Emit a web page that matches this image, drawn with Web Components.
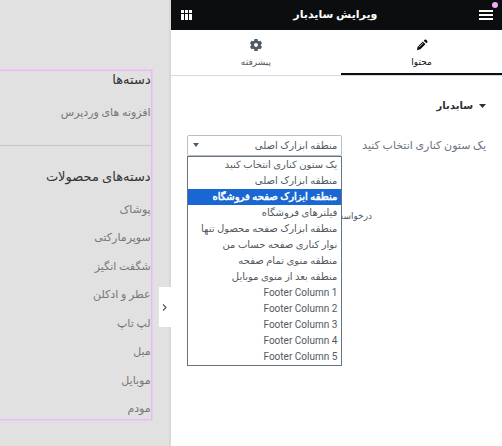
<!DOCTYPE html>
<html lang="fa" dir="rtl">
<head>
<meta charset="utf-8">
<meta name="viewport" content="width=device-width, initial-scale=1">
<title>ویرایش سایدبار</title>
<style>
  body {
    margin: 0;
    font-family: Roboto, "DejaVu Sans", sans-serif;
    font-size: 11px;
    line-height: 16px;
    color: #69727d;
    background: #fff;
  }
</style>
</head>
<body>
<editor-app>
  <editor-panel heading="ویرایش سایدبار">
    <panel-tab slot="tabs" icon="pencil" active>محتوا</panel-tab>
    <panel-tab slot="tabs" icon="gear">پیشرفته</panel-tab>
    <panel-section heading="سایدبار">
      <select-control label="یک ستون کناری انتخاب کنید" selected="1" highlighted="2"></select-control>
      <apply-note>درخواست</apply-note>
    </panel-section>
  </editor-panel>
  <site-preview slot="preview">
    <link-widget heading="دسته‌ها" links="افزونه های وردپرس"></link-widget>
    <link-widget heading="دسته‌های محصولات" grow
      links="پوشاک|سوپرمارکتی|شگفت انگیز|عطر و ادکلن|لپ تاپ|مبل|موبایل|مودم"></link-widget>
  </site-preview>
</editor-app>

<script>
"use strict";

////////////////////////////////////////////
// Constants
const OPTIONS = [
  "یک ستون کناری انتخاب کنید",
  "منطقه ابزارک اصلی",
  "منطقه ابزارک صفحه فروشگاه",
  "فیلترهای فروشگاه",
  "منطقه ابزارک صفحه محصول تنها",
  "نوار کناری صفحه حساب من",
  "منطقه منوی تمام صفحه",
  "منطقه بعد از منوی موبایل",
  "Footer Column 1",
  "Footer Column 2",
  "Footer Column 3",
  "Footer Column 4",
  "Footer Column 5",
];

const ICONS = {
  pencil: `<path d="M1 13l1-4 6-6 3 3-6 6z"/><path d="M9 2l1-1q1-1 2 0l1 1q1 1 0 2l-1 1z"/><path d="M3.5 9.5l5-5" stroke="#fff" stroke-width=".8"/>`,
  gear: `<path fill-rule="evenodd" d="M5.2 0h3.600l.4 2 1.200.7 1.900-.7 1.800 3.100-1.500 1.300v1.300l1.500 1.300-1.800 3.100-1.900-.7-1.200.7-.4 1.900H5.200l-.4-1.900-1.200-.7-1.900.7L-.1 9l1.500-1.300V6.400L-.1 5.100 1.700 2l1.900.7L4.800 2zM7 4.700a2.300 2.300 0 1 0 0 4.600 2.300 2.300 0 0 0 0-4.600z"/>`,
};

////////////////////////////////////////////
// Page frame: panel on one side, preview on the other
class EditorApp extends HTMLElement {
  constructor() {
    super();
    this.attachShadow({ mode: "open" }).innerHTML = `
      <style>
        :host { display: flex; min-height: 100vh; }
        .panel { flex: 1; min-width: 0; }
        .preview { flex: 0 0 34%; display: flex; min-width: 0; }
      </style>
      <div class="panel"><slot></slot></div>
      <div class="preview"><slot name="preview"></slot></div>
    `;
  }
}

class EditorPanel extends HTMLElement {
  constructor() {
    super();
    this.attachShadow({ mode: "open" }).innerHTML = `
      <style>
        :host { display: block; }
        header {
          display: flex;
          align-items: center;
          justify-content: space-between;
          height: 30px;
          padding: 0 9px;
          color: #fff;
          background: #0c0d0e;
        }
        h1 { margin: 0; font-size: 11px; line-height: 20px; }
        button {
          position: relative;
          display: flex;
          padding: 0;
          border: 0;
          color: inherit;
          background: none;
        }
        .badge {
          position: absolute;
          top: -8px;
          right: -5px;
          width: 6px;
          height: 6px;
          border-radius: 50%;
          background: #f0abfc;
        }
        nav { display: flex; height: 45px; border-bottom: 1px solid #d5d8dc; }
      </style>
      <header>
        <button type="button" aria-label="منو">
          <svg width="14" height="10" fill="currentColor"><path d="M0 0h14v2H0zM0 4h14v2H0zM0 8h14v2H0z"/></svg>
          <span class="badge"></span>
        </button>
        <h1>${this.getAttribute("heading")}</h1>
        <button type="button" aria-label="ابزارک‌ها">
          <svg width="12" height="10" fill="currentColor"><path d="M1 0h3v3H1zM5 0h3v3H5zM9 0h3v3H9zM1 4h3v6H1zM5 4h3v6H5zM9 4h3v6H9z"/></svg>
        </button>
      </header>
      <nav><slot name="tabs"></slot></nav>
      <slot></slot>
    `;
  }
}

class PanelTab extends HTMLElement {
  constructor() {
    super();
    this.attachShadow({ mode: "open" }).innerHTML = `
      <style>
        :host { display: flex; flex: 1 0 auto; }
        button {
          flex: 1;
          display: flex;
          flex-direction: column;
          align-items: center;
          gap: 3px;
          padding: 9px 0 0;
          border: 0;
          border-bottom: 2px solid transparent;
          font: inherit;
          font-size: 9px;
          color: #515962;
          background: none;
        }
        :host([active]) button { color: #0c0d0e; border-color: #0c0d0e; }
      </style>
      <button type="button">
        <svg width="12" height="12" viewBox="0 0 14 14" fill="currentColor">${ICONS[this.getAttribute("icon")]}</svg>
        <span><slot></slot></span>
      </button>
    `;
  }
}

class PanelSection extends HTMLElement {
  constructor() {
    super();
    this.attachShadow({ mode: "open" }).innerHTML = `
      <style>
        :host { display: block; padding: 20px 16px; }
        h2 {
          display: flex;
          align-items: center;
          gap: 6px;
          margin: 0 0 19px;
          font-size: 10px;
          line-height: 20px;
          color: #2c3036;
        }
      </style>
      <h2>
        <svg width="7" height="4" fill="currentColor"><path d="M0 0h7L3.500 4z"/></svg>
        ${this.getAttribute("heading")}
      </h2>
      <slot></slot>
    `;
  }
}

////////////////////////////////////////////
// Labelled drop-down with its list open below
class SelectControl extends HTMLElement {
  constructor() {
    super();
    const selected = Number(this.getAttribute("selected"));
    const highlighted = Number(this.getAttribute("highlighted"));
    this.attachShadow({ mode: "open" }).innerHTML = `
      <style>
        :host { display: flex; align-items: center; justify-content: space-between; }
        .field { position: relative; flex: 0 0 52%; font-size: 10px; }
        select {
          appearance: none;
          display: block;
          box-sizing: border-box;
          width: 100%;
          height: 21px;
          padding: 0 4px;
          border: 1px solid #babfc5;
          border-radius: 2px;
          font: inherit;
          color: #515962;
          background: #fff;
        }
        .caret { position: absolute; top: 8px; left: 6px; color: #515962; }
        ul {
          position: absolute;
          top: 100%;
          left: 0;
          right: 0;
          z-index: 1;
          margin: 0;
          padding: 0;
          border: 1px solid #69727d;
          list-style: none;
          color: #515962;
          background: #fff;
        }
        li { height: 16px; padding: 0 4px; white-space: nowrap; }
        li[aria-selected="true"] {
          color: #fff;
          background: #1967d2;
          -webkit-text-stroke: 0.5px #fff;
        }
      </style>
      <label for="column">${this.getAttribute("label")}</label>
      <div class="field">
        <select id="column">
          ${OPTIONS.map((text, i) => `<option${i === selected ? " selected" : ""}>${text}</option>`).join("")}
        </select>
        <svg class="caret" width="6" height="4" fill="currentColor"><path d="M0 0h6L3 4z"/></svg>
        <ul role="listbox">
          ${OPTIONS.map((text, i) => `<li role="option" aria-selected="${i === highlighted}">${text}</li>`).join("")}
        </ul>
      </div>
    `;
  }
}

class ApplyNote extends HTMLElement {
  constructor() {
    super();
    this.attachShadow({ mode: "open" }).innerHTML = `
      <style>
        :host { display: block; padding: 52px 114px 0 0; font-size: 9px; color: #515962; }
      </style>
      <slot></slot>
    `;
  }
}

////////////////////////////////////////////
// Preview
class SitePreview extends HTMLElement {
  constructor() {
    super();
    this.attachShadow({ mode: "open" }).innerHTML = `
      <style>
        :host {
          position: relative;
          flex: 1;
          display: flex;
          box-sizing: border-box;
          padding: 70px 17px 26px 0;
          border-right: 2px solid #d8d8d8;
          background: #e1e1e1;
        }
        .widgets {
          flex: 1;
          display: flex;
          flex-direction: column;
          border: 1px solid #eab8f3;
          border-left: 0;
          box-shadow: 0 0 0 1px #e8cdec;
        }
        .handle {
          position: absolute;
          top: 287px;
          right: -2px;
          display: flex;
          align-items: center;
          justify-content: center;
          width: 12px;
          height: 40px;
          padding: 0;
          border: 0;
          color: #515962;
          background: #fff;
        }
      </style>
      <div class="widgets"><slot></slot></div>
      <button class="handle" type="button" aria-label="بستن پنل">
        <svg width="5" height="7" fill="none" stroke="currentColor" stroke-width="1.200"><path d="M1 .5l3 3-3 3"/></svg>
      </button>
    `;
  }
}

class LinkWidget extends HTMLElement {
  constructor() {
    super();
    const links = this.getAttribute("links").split("|");
    this.attachShadow({ mode: "open" }).innerHTML = `
      <style>
        :host { display: flex; flex-direction: column; font-size: 11px; }
        :host(:not([grow])) { padding-bottom: 22px; border-bottom: 1px solid #c6c6c6; }
        :host([grow]) { flex: 1; padding-top: 22px; }
        h3 {
          margin: 0 0 14px;
          font-size: 13px;
          font-weight: normal;
          line-height: 18px;
          color: #333;
        }
        ul {
          flex: 1;
          display: flex;
          flex-direction: column;
          justify-content: space-between;
          margin: 0;
          padding: 0;
          list-style: none;
        }
        li { line-height: 20px; }
        a { color: #777; text-decoration: none; }
      </style>
      <h3>${this.getAttribute("heading")}</h3>
      <ul>${links.map((text) => `<li><a href="#">${text}</a></li>`).join("")}</ul>
    `;
  }
}

////////////////////////////////////////////
// Registration
customElements.define("editor-app", EditorApp);
customElements.define("editor-panel", EditorPanel);
customElements.define("panel-tab", PanelTab);
customElements.define("panel-section", PanelSection);
customElements.define("select-control", SelectControl);
customElements.define("apply-note", ApplyNote);
customElements.define("site-preview", SitePreview);
customElements.define("link-widget", LinkWidget);
</script>
</body>
</html>
